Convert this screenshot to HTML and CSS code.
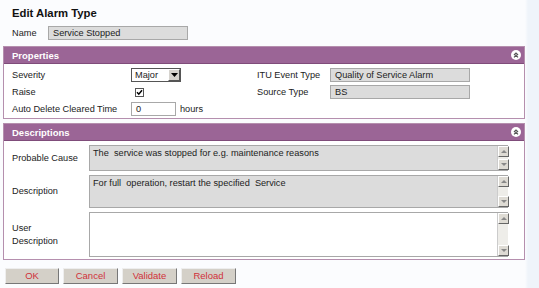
FILE: index.html
```html
<!DOCTYPE html>
<html>
<head>
<meta charset="utf-8">
<link rel="stylesheet" href="styles.css">
</head>
<body>
<div class="page">
  <h1 class="title">Edit Alarm Type</h1>
  <div class="name-row">
    <span class="lbl name-lbl">Name</span>
    <div class="field ro name-field">Service Stopped</div>
  </div>

  <div class="panel props">
    <div class="panel-head">
      <span>Properties</span>
      <span class="collapse"><svg width="10" height="10" viewBox="0 0 10 10"><circle cx="5" cy="5" r="5" fill="#fff"/><path d="M3 5 L5 3 L7 5 M3 7.3 L5 5.3 L7 7.3" stroke="#555" stroke-width="1.2" fill="none"/></svg></span>
    </div>
    <div class="props-body">
      <div class="col left">
        <div class="row"><span class="lbl w1">Severity</span>
          <div class="select"><span class="sel-val">Major</span><span class="sel-btn"><svg width="7" height="4" viewBox="0 0 7 4"><path d="M0 0 H7 L3.5 4 Z" fill="#000"/></svg></span></div>
        </div>
        <div class="row"><span class="lbl w1">Raise</span>
          <span class="check"><svg width="9" height="9" viewBox="0 0 9 9"><rect x="0.5" y="0.5" width="8" height="8" fill="#fff" stroke="#555"/><path d="M2 4.2 L3.8 6.2 L7 2.2" stroke="#000" stroke-width="1.5" fill="none"/></svg></span>
        </div>
        <div class="row"><span class="lbl w1">Auto Delete Cleared Time</span>
          <div class="field wh hours-field">0</div><span class="lbl hours">hours</span>
        </div>
      </div>
      <div class="col right">
        <div class="row"><span class="lbl w2">ITU Event Type</span><div class="field ro wide">Quality of Service Alarm</div></div>
        <div class="row"><span class="lbl w2">Source Type</span><div class="field ro wide">BS</div></div>
      </div>
    </div>
  </div>

  <div class="panel descs">
    <div class="panel-head">
      <span>Descriptions</span>
      <span class="collapse"><svg width="10" height="10" viewBox="0 0 10 10"><circle cx="5" cy="5" r="5" fill="#fff"/><path d="M3 5 L5 3 L7 5 M3 7.3 L5 5.3 L7 7.3" stroke="#555" stroke-width="1.2" fill="none"/></svg></span>
    </div>
    <div class="descs-body">
      <div class="drow h1"><span class="lbl w3">Probable Cause</span>
        <div class="area ro"><div class="area-text">The&nbsp; service was stopped for e.g. maintenance reasons</div>
          <div class="sb"><span class="arr up"></span><span class="arr dn"></span></div></div>
      </div>
      <div class="drow h2"><span class="lbl w3">Description</span>
        <div class="area ro"><div class="area-text">For full&nbsp; operation, restart the specified&nbsp; Service</div>
          <div class="sb"><span class="arr up"></span><span class="arr dn"></span></div></div>
      </div>
      <div class="drow h3"><span class="lbl w3">User<br>Description</span>
        <div class="area wh"><div class="area-text"></div>
          <div class="sb"><span class="arr up"></span><span class="arr dn"></span></div></div>
      </div>
    </div>
  </div>

  <div class="buttons">
    <button class="btn b-ok">OK</button>
    <button class="btn b-cancel">Cancel</button>
    <button class="btn b-val">Validate</button>
    <button class="btn b-rel">Reload</button>
  </div>
</div>
</body>
</html>
```
FILE: styles.css
```css
* { box-sizing: border-box; }
html, body { margin: 0; padding: 0; }
body {
  background: #eff4fa;
  font-family: "Liberation Sans", Arial, sans-serif;
  font-size: 9.2px;
  color: #222;
  width: 539px;
  height: 288px;
  overflow: hidden;
}
.page {
  width: 539px;
  height: 288px;
  background: linear-gradient(to right, #fbfcfe 0, #fbfcfe 525px, #eff4fa 528px);
  padding: 6px 14px 0 3px;
}
.title {
  margin: 0 0 0 9px;
  font-size: 11.3px;
  font-weight: bold;
  color: #111;
  height: 16px;
  line-height: 15px;
}
.lbl { white-space: nowrap; }
.name-row {
  display: flex;
  align-items: center;
  margin: 4px 0 0 9px;
  height: 14px;
}
.name-lbl { width: 36px; }
.field {
  height: 14px;
  line-height: 12px;
  padding: 0 4px;
  border: 1px solid #a8a8a8;
  white-space: nowrap;
}
.ro { background: #dcdcdc; }
.wh { background: #fff; }
.name-field { width: 140px; }

.panel {
  border: 1px solid #b58fae;
  background: #fff;
}
.props { margin-top: 6px; }
.descs { margin-top: 4px; }
.panel-head {
  height: 17px;
  background: #9b6596;
  color: #fff;
  font-weight: bold;
  font-size: 9.5px;
  display: flex;
  align-items: center;
  justify-content: space-between;
  padding: 0 3px 0 8px;
  border-bottom: 1px solid #7f4c7a;
}
.collapse { display: flex; }

.props-body {
  display: flex;
  padding: 4px 0 2px 8px;
  height: 54px;
}
.col { display: flex; flex-direction: column; gap: 3px; }
.row { display: flex; align-items: center; height: 14px; }
.left { width: 245px; }
.w1 { width: 119px; }
.w2 { width: 73px; }
.select {
  width: 50px;
  height: 14px;
  border: 1px solid #555;
  background: #fff;
  display: flex;
  align-items: center;
  justify-content: space-between;
  padding-left: 3px;
}
.sel-btn {
  width: 12px;
  height: 12px;
  background: #d6d3ce;
  border: 1px solid;
  border-color: #fff #555 #555 #fff;
  display: flex;
  align-items: center;
  justify-content: center;
}
.check { display: flex; margin-left: 4px; }
.hours-field { width: 45px; }
.hours { margin-left: 4px; }
.wide { width: 140px; }

.descs-body {
  padding: 4px 16px 2px 8px;
  display: flex;
  flex-direction: column;
  gap: 4px;
}
.drow { display: flex; align-items: center; }
.w3 { width: 77px; line-height: 13px; }
.h1 { height: 26px; }
.h2 { height: 33px; }
.h3 { height: 45px; }
.area {
  flex: 1;
  height: 100%;
  border: 1px solid #a8a8a8;
  border-right: none;
  display: flex;
}
.area-text { flex: 1; padding: 1px 3px; line-height: 12px; }
.sb {
  width: 11px;
  background: #eeede9;
  display: flex;
  flex-direction: column;
  justify-content: space-between;
  border-left: 1px solid #ccc;
}
.arr {
  width: 11px;
  height: 11px;
  background: #dedbd4;
  border: 1px solid;
  border-color: #fff #666 #666 #fff;
  position: relative;
}
.arr::after {
  content: "";
  position: absolute;
  left: 2px;
  top: 3px;
  border-left: 3px solid transparent;
  border-right: 3px solid transparent;
}
.up::after { border-bottom: 3px solid #888; }
.dn::after { border-top: 3px solid #888; }

.buttons {
  display: flex;
  gap: 4px;
  margin: 8px 0 0 2px;
}
.btn {
  height: 16px;
  padding: 0;
  background: #d4d0c8;
  border: 1px solid;
  border-color: #eee #777 #777 #eee;
  color: #d0303a;
  font-family: "Liberation Sans", Arial, sans-serif;
  font-size: 9.5px;
  line-height: 14px;
}
.b-ok { width: 54px; }
.b-cancel { width: 55px; }
.b-val { width: 55px; }
.b-rel { width: 55px; }
```
